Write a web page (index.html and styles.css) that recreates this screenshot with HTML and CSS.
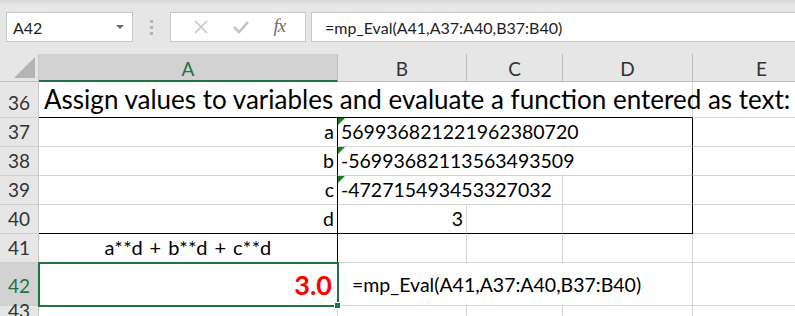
FILE: index.html
```html
<!DOCTYPE html>
<html>
<head>
  <meta charset="UTF-8">
  <link rel="stylesheet" href="styles.css">
  <title>mp_Eval</title>
</head>
<body>
<div class="toolbar">
  <div class="namebox">
    <span class="ref">A42</span>
    <span class="drop"></span>
  </div>
  <div class="grip"><i></i><i></i><i></i></div>
  <div class="btnbox">
    <svg class="ico" width="16" height="16" viewBox="0 0 16 16"><path d="M2 2 L14 14 M14 2 L2 14" stroke="#c4c4c4" stroke-width="1.6" fill="none"/></svg>
    <svg class="ico" width="18" height="16" viewBox="0 0 18 16"><path d="M2 8 L7 13 L16 3" stroke="#c4c4c4" stroke-width="2.6" fill="none"/></svg>
    <span class="fx">fx</span>
  </div>
  <div class="formula">=mp_Eval(A41,A37:A40,B37:B40)</div>
</div>

<div class="sheet">
  <!-- column headers -->
  <div class="corner"><span class="tri"></span></div>
  <div class="hd sel">A</div>
  <div class="hd">B</div>
  <div class="hd">C</div>
  <div class="hd">D</div>
  <div class="hd">E</div>

  <!-- 36 -->
  <div class="rh">36</div>
  <div class="c title span-ad bb">Assign values to variables and evaluate a function entered as text:</div>
  <div class="c"></div>

  <!-- 37 -->
  <div class="rh">37</div>
  <div class="c right br">a</div>
  <div class="c span-bd br note">569936821221962380720</div>
  <div class="c"></div>

  <!-- 38 -->
  <div class="rh">38</div>
  <div class="c right br">b</div>
  <div class="c span-bd br note">-56993682113563493509</div>
  <div class="c"></div>

  <!-- 39 -->
  <div class="rh">39</div>
  <div class="c right br">c</div>
  <div class="c span-bc note">-472715493453327032</div>
  <div class="c br"></div>
  <div class="c"></div>

  <!-- 40 -->
  <div class="rh">40</div>
  <div class="c right br bb">d</div>
  <div class="c right bb">3</div>
  <div class="c bb"></div>
  <div class="c br bb"></div>
  <div class="c"></div>

  <!-- 41 -->
  <div class="rh">41</div>
  <div class="c center br expr">a**d + b**d + c**d</div>
  <div class="c"></div>
  <div class="c"></div>
  <div class="c"></div>
  <div class="c"></div>

  <!-- 42 -->
  <div class="rh rsel">42</div>
  <div class="c right active"><span class="result">3.0</span></div>
  <div class="c span-bd tall">=mp_Eval(A41,A37:A40,B37:B40)</div>
  <div class="c"></div>

  <!-- 43 -->
  <div class="rh">43</div>
  <div class="c"></div>
  <div class="c"></div>
  <div class="c"></div>
  <div class="c"></div>
  <div class="c"></div>
</div>
</body>
</html>
```

FILE: styles.css
```css
html,
body {
  margin: 0;
  padding: 0;
}

body {
  width: 795px;
  height: 316px;
  overflow: hidden;
  background: #ffffff;
  font-family: "Lato", "Open Sans", sans-serif;
  color: #000;
}

/* formula bar */
.toolbar {
  height: 54px;
  box-sizing: border-box;
  padding: 12px 0 0 6px;
  display: flex;
  align-items: flex-start;
  background: linear-gradient(#d9d9d9 0px, #e6e6e6 5px, #e6e6e6 100%);
}

.namebox {
  width: 127px;
  height: 30px;
  box-sizing: border-box;
  background: #fff;
  border: 1px solid #c6c6c6;
  display: flex;
  align-items: center;
  justify-content: space-between;
  padding: 0 8px 0 6px;
  font-size: 16px;
  color: #222;
}

.drop {
  width: 0;
  height: 0;
  border-left: 4px solid transparent;
  border-right: 4px solid transparent;
  border-top: 4px solid #6a6a6a;
}

.grip {
  width: 37px;
  height: 30px;
  display: flex;
  flex-direction: column;
  align-items: center;
  justify-content: center;
  gap: 3px;
}

.grip i {
  display: block;
  width: 3px;
  height: 3px;
  background: #b3b3b3;
}

.btnbox {
  width: 136px;
  height: 30px;
  box-sizing: border-box;
  background: #fff;
  border: 1px solid #c6c6c6;
  display: flex;
  align-items: center;
  justify-content: space-around;
  padding: 0 8px 0 10px;
}

.fx {
  font-family: "Liberation Serif", serif;
  font-style: italic;
  font-size: 19px;
  color: #6e6e6e;
  letter-spacing: -1px;
  margin-top: -2px;
}

.formula {
  flex: 1;
  height: 30px;
  box-sizing: border-box;
  margin-left: 5px;
  background: #fff;
  border: 1px solid #c6c6c6;
  border-right: none;
  padding: 0 0 0 13px;
  display: flex;
  align-items: center;
  font-size: 16px;
  color: #222;
}

/* grid */
.sheet {
  display: grid;
  grid-template-columns: 39px 299px 129px 96px 130px 138px;
  grid-template-rows: 28px 36px 29px 29px 29px 29px 29px 43px 20px;
  font-size: 19.5px;
}

.corner {
  background: #e6e6e6;
  border-right: 1px solid #c8c8c8;
  border-bottom: 1px solid #bdbdbd;
  position: relative;
}

.tri {
  position: absolute;
  right: 3px;
  bottom: 3px;
  width: 0;
  height: 0;
  border-left: 21px solid transparent;
  border-bottom: 21px solid #b4b4b4;
}

.hd {
  background: #e6e6e6;
  border-right: 1px solid #bdbdbd;
  border-bottom: 1px solid #bdbdbd;
  display: flex;
  align-items: center;
  justify-content: center;
  font-size: 19px;
  color: #333;
  padding-top: 2px;
  box-sizing: border-box;
}

.hd.sel {
  background: #d2d2d2;
  color: #217346;
  border-bottom: 2px solid #217346;
}

.rh {
  background: #e6e6e6;
  border-right: 1px solid #c8c8c8;
  border-bottom: 1px solid #d0d0d0;
  display: flex;
  align-items: flex-end;
  justify-content: center;
  padding-bottom: 3px;
  box-sizing: border-box;
  font-size: 19px;
  color: #333;
}

.rh.rsel {
  background: #d2d2d2;
  color: #217346;
  padding-bottom: 8px;
}

.c {
  border-right: 1px solid #d4d4d4;
  border-bottom: 1px solid #d4d4d4;
  box-sizing: border-box;
  display: flex;
  align-items: flex-end;
  padding: 0 3px 3px 3px;
  white-space: nowrap;
  position: relative;
  overflow: visible;
}

.span-ad {
  grid-column: 2 / 6;
}

.span-bd {
  grid-column: 3 / 6;
}

.span-bc {
  grid-column: 3 / 5;
}

.br {
  border-right-color: #000;
}

.bb {
  border-bottom-color: #000;
}

.right {
  justify-content: flex-end;
}

.center {
  justify-content: center;
}

.title {
  font-size: 26px;
  padding-left: 5px;
  padding-bottom: 2px;
  z-index: 1;
}

.expr {
  font-size: 20px;
  word-spacing: 1px;
  letter-spacing: 0.4px;
}

/* green error-check triangle */
.note::before {
  content: "";
  position: absolute;
  left: 0;
  top: 0;
  border-top: 7px solid #1f7d1f;
  border-right: 7px solid transparent;
}

.tall {
  padding-left: 14px;
  padding-bottom: 9px;
}

.active {
  outline: 2px solid #217346;
  outline-offset: -1px;
  z-index: 2;
  padding-right: 5px;
  padding-bottom: 7px;
}

.active::after {
  content: "";
  position: absolute;
  right: -4px;
  bottom: -4px;
  width: 5px;
  height: 5px;
  background: #217346;
  border: 1px solid #fff;
}

.result {
  color: #ff0000;
  font-weight: bold;
  font-size: 27px;
  line-height: 1;
}
```
